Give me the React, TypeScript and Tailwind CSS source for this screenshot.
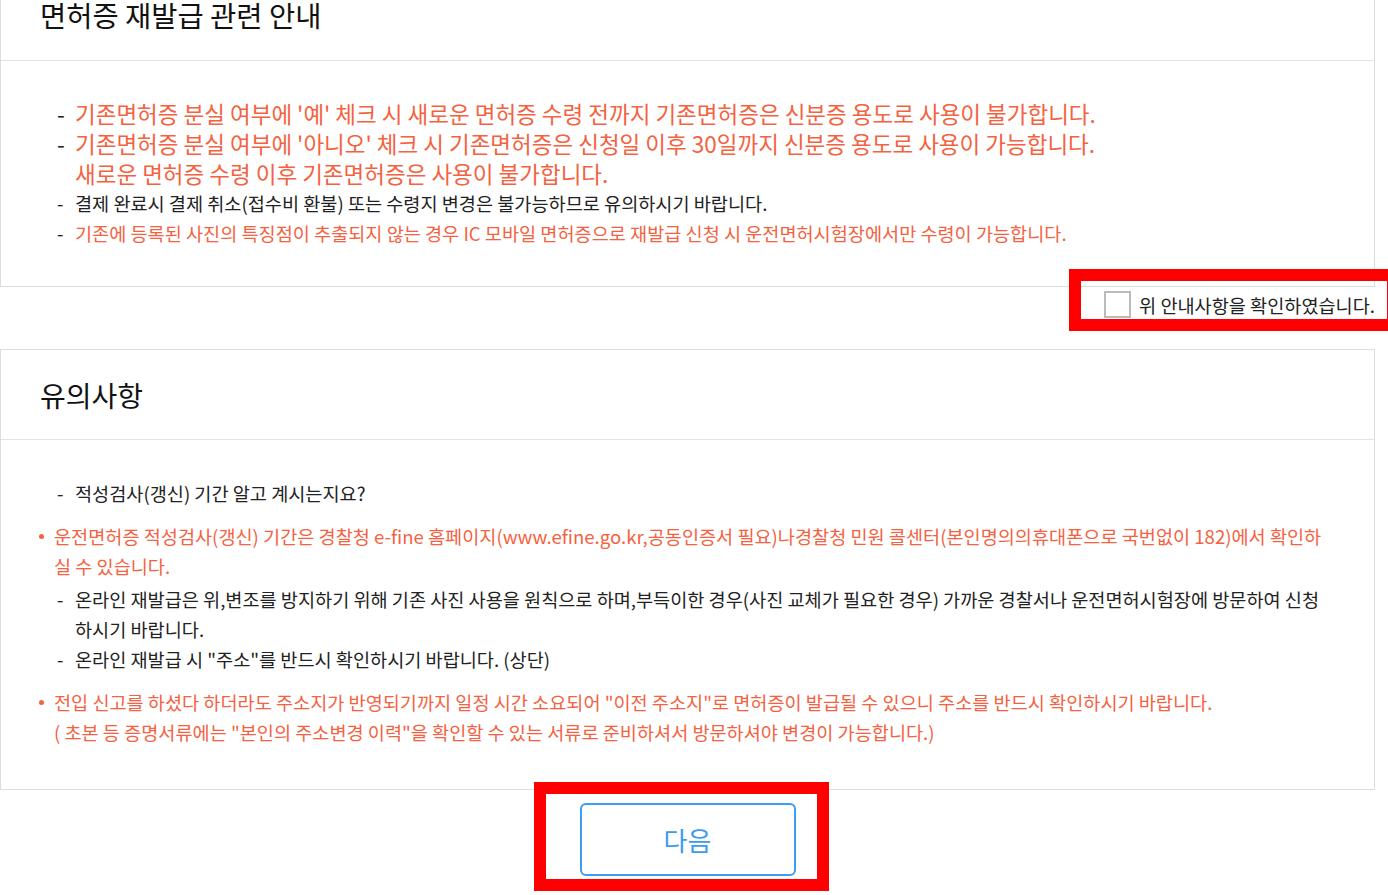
import React from 'react';

const RED = 'text-[#f4623f]';

const Dash: React.FC<{ children: React.ReactNode; className?: string }> = ({ children, className = '' }) => (
    <div className={`flex ${className}`}>
        <span className="w-[18px] shrink-0 text-[#222]">-</span>
        <p>{children}</p>
    </div>
);

const Bullet: React.FC<{ children: React.ReactNode }> = ({ children }) => (
    <div className={`flex mt-[13px] mb-[3px] ${RED}`}>
        <span className="w-[26px] shrink-0 flex justify-start pl-[11px] pt-[13px]">
            <span className="block w-[5px] h-[5px] rounded-full bg-[#f4623f]" />
        </span>
        <p>{children}</p>
    </div>
);

const App: React.FC = () => {
    return (
        <div className="relative min-h-[895px] overflow-hidden bg-white" style={{ fontFamily: '"Noto Sans CJK KR", "Noto Sans", sans-serif' }}>
            <div className="w-[1375px] -mt-[30px]">
                {/* 재발급 안내 */}
                <section className="border border-[#dddddd]">
                    <header className="h-[90px] flex items-center px-[39px] border-b border-[#e3e3e3]">
                        <h2 className="text-[28.5px] text-[#111]">면허증 재발급 관련 안내</h2>
                    </header>
                    <div className="pl-[56px] pt-[37px] pb-[38px] leading-[30px]">
                        <Dash className={`text-[22.5px] ${RED}`}>기존면허증 분실 여부에 '예' 체크 시 새로운 면허증 수령 전까지 기존면허증은 신분증 용도로 사용이 불가합니다.</Dash>
                        <Dash className={`text-[22.5px] ${RED}`}>
                            기존면허증 분실 여부에 '아니오' 체크 시 기존면허증은 신청일 이후 30일까지 신분증 용도로 사용이 가능합니다.<br />
                            새로운 면허증 수령 이후 기존면허증은 사용이 불가합니다.
                        </Dash>
                        <Dash className="text-[18.6px] text-[#222]">결제 완료시 결제 취소(접수비 환불) 또는 수령지 변경은 불가능하므로 유의하시기 바랍니다.</Dash>
                        <Dash className={`text-[18.6px] ${RED}`}>기존에 등록된 사진의 특징점이 추출되지 않는 경우 IC 모바일 면허증으로 재발급 신청 시 운전면허시험장에서만 수령이 가능합니다.</Dash>
                    </div>
                </section>

                <div className="h-[62px] flex justify-end items-start pt-[4px]">
                    <label className="flex items-center gap-[8px]">
                        <span className="w-[27px] h-[27px] border-2 border-[#bbbbbb] bg-white" />
                        <span className="text-[18.6px] text-[#222]">위 안내사항을 확인하였습니다.</span>
                    </label>
                </div>

                {/* 유의사항 */}
                <section className="border border-[#dddddd]">
                    <header className="h-[90px] flex items-center px-[39px] border-b border-[#e3e3e3]">
                        <h2 className="text-[28px] text-[#111]">유의사항</h2>
                    </header>
                    <div className="pl-[27px] pt-[38px] pb-[39px] leading-[30px] text-[18.6px] text-[#222]">
                        <Dash className="ml-[29px]">적성검사(갱신) 기간 알고 계시는지요?</Dash>
                        <Bullet>
                            운전면허증 적성검사(갱신) 기간은 경찰청 e-fine 홈페이지(www.efine.go.kr,공동인증서 필요)나경찰청 민원 콜센터(본인명의의휴대폰으로 국번없이 182)에서 확인하<br />
                            실 수 있습니다.
                        </Bullet>
                        <Dash className="ml-[29px]">
                            온라인 재발급은 위,변조를 방지하기 위해 기존 사진 사용을 원칙으로 하며,부득이한 경우(사진 교체가 필요한 경우) 가까운 경찰서나 운전면허시험장에 방문하여 신청<br />
                            하시기 바랍니다.
                        </Dash>
                        <Dash className="ml-[29px]">온라인 재발급 시 "주소"를 반드시 확인하시기 바랍니다. (상단)</Dash>
                        <Bullet>
                            전입 신고를 하셨다 하더라도 주소지가 반영되기까지 일정 시간 소요되어 "이전 주소지"로 면허증이 발급될 수 있으니 주소를 반드시 확인하시기 바랍니다.<br />
                            ( 초본 등 증명서류에는 "본인의 주소변경 이력"을 확인할 수 있는 서류로 준비하셔서 방문하셔야 변경이 가능합니다.)
                        </Bullet>
                    </div>
                </section>

                <div className="flex justify-center pt-[13px]">
                    <button className="w-[216px] h-[73px] rounded-[6px] border-2 border-[#3b9cf0] text-[26px] text-[#3b9cf0] bg-white">다음</button>
                </div>
            </div>

            {/* annotation boxes */}
            <div className="absolute left-[1069px] top-[269px] w-[330px] h-[62px] border-[12px] border-[#ff0000] pointer-events-none" />
            <div className="absolute left-[534px] top-[782px] w-[295px] h-[109px] border-[12px] border-[#ff0000] pointer-events-none" />
        </div>
    );
};

export default App;
